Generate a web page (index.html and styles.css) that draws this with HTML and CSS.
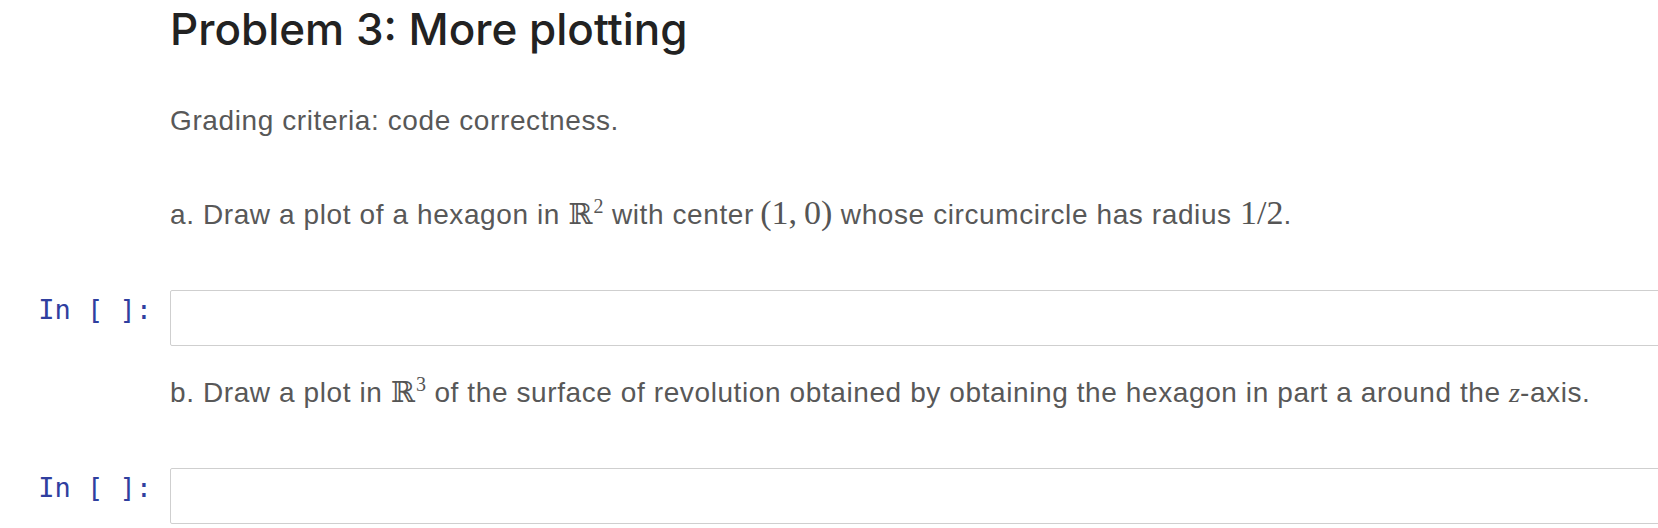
FILE: index.html
```html
<!DOCTYPE html>
<html>
<head>
<meta charset="utf-8">
<link rel="stylesheet" href="styles.css">
</head>
<body>
<div class="notebook">
  <div class="cell md title-cell">
    <div class="prompt"></div>
    <div class="md-body"><h2 class="title">Problem 3: More plotting</h2></div>
  </div>
  <div class="cell md grading-cell">
    <div class="prompt"></div>
    <div class="md-body"><p>Grading criteria: code correctness.</p></div>
  </div>
  <div class="cell md part-a">
    <div class="prompt"></div>
    <div class="md-body"><p>a. Draw a plot of a hexagon in <span class="m"><span class="bb">ℝ</span><sup class="sup">2</sup></span> with center <span class="m num paren">(1,<span class="thin"></span>0)</span> whose circumcircle has radius <span class="m num">1/2</span>.</p></div>
  </div>
  <div class="cell code code-a">
    <div class="prompt">In [ ]:</div>
    <div class="input"></div>
  </div>
  <div class="cell md part-b">
    <div class="prompt"></div>
    <div class="md-body"><p>b. Draw a plot in <span class="m"><span class="bb">ℝ</span><sup class="sup">3</sup></span> of the surface of revolution obtained by obtaining the hexagon in part a around the <span class="m it">z</span>-axis.</p></div>
  </div>
  <div class="cell code code-b">
    <div class="prompt">In [ ]:</div>
    <div class="input"></div>
  </div>
</div>
</body>
</html>
```

FILE: styles.css
```css
html, body {
  margin: 0;
  padding: 0;
  background: #ffffff;
  overflow: hidden;
}

.notebook {
  display: flex;
  flex-direction: column;
  width: 1680px;
  font-family: "Liberation Sans", Arial, sans-serif;
}

.cell {
  display: flex;
  align-items: flex-start;
}

.prompt {
  flex: 0 0 170px;
  box-sizing: border-box;
  padding-right: 18px;
  text-align: right;
  font-family: "DejaVu Sans Mono", monospace;
  font-size: 27px;
  line-height: 34px;
  color: #303f9f;
}

.md-body {
  flex: 1;
  color: #585858;
  font-size: 28px;
  line-height: 34px;
  letter-spacing: 0.6px;
}

.md-body p {
  margin: 0;
}

.title {
  margin: 0;
  font-family: Inter, "Liberation Sans", sans-serif;
  font-size: 44px;
  line-height: 54px;
  font-weight: 500;
  color: #222222;
  letter-spacing: 0;
}

.title-cell { margin-top: 2px; }
.grading-cell { margin-top: 48px; }
.part-a { margin-top: 60px; }
.code-a { margin-top: 58px; }
.part-b { margin-top: 30px; }
.code-b { margin-top: 58px; }

.code .prompt {
  padding-top: 3px;
}

.input {
  flex: 1;
  height: 56px;
  box-sizing: border-box;
  border: 1px solid #cfcfcf;
  border-radius: 2px;
  background: #ffffff;
}

.m {
  line-height: 0;
  letter-spacing: 0;
  font-family: "DejaVu Serif", "Liberation Serif", serif;
  color: #555555;
}

.bb {
  font-size: 29px;
}

.sup {
  font-size: 20px;
  line-height: 0;
  vertical-align: 11px;
  margin-left: 1px;
  font-family: "Liberation Serif", serif;
}

.num {
  font-family: "Liberation Serif", serif;
  font-size: 34px;
}

.paren {
  margin-left: -2px;
}

.thin {
  display: inline-block;
  width: 7px;
}

.it {
  font-family: "Liberation Serif", serif;
  font-style: italic;
  font-size: 28px;
}
```
